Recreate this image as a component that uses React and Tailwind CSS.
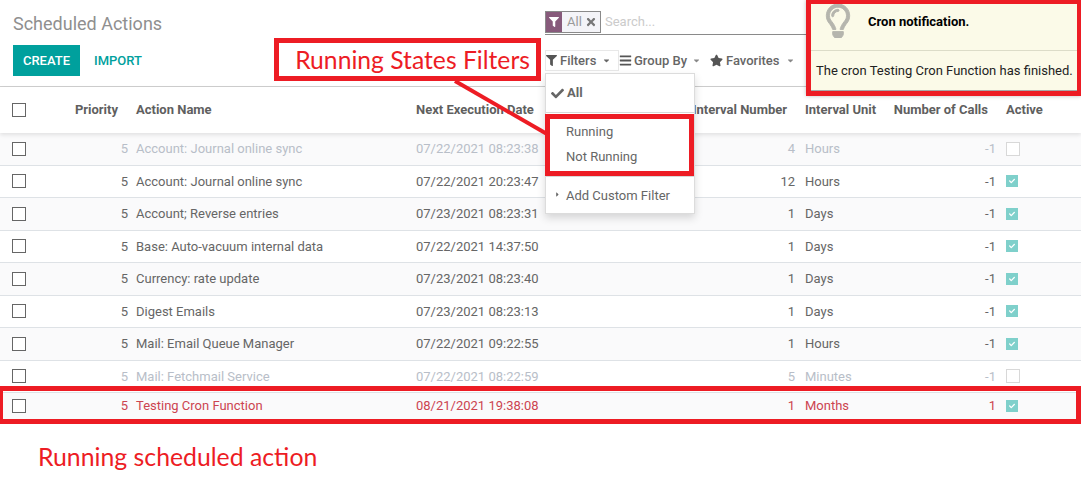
import React from 'react';
import { FaFilter, FaTimes, FaBars, FaStar, FaCheck, FaCaretDown, FaCaretRight, FaRegLightbulb } from 'react-icons/fa';

const rows = [
    { name: 'Account: Journal online sync', date: '07/22/2021 08:23:38', num: 4, unit: 'Hours', calls: -1, active: false, tint: true },
    { name: 'Account: Journal online sync', date: '07/22/2021 20:23:47', num: 12, unit: 'Hours', calls: -1, active: true },
    { name: 'Account; Reverse entries', date: '07/23/2021 08:23:31', num: 1, unit: 'Days', calls: -1, active: true, tint: true },
    { name: 'Base: Auto-vacuum internal data', date: '07/22/2021 14:37:50', num: 1, unit: 'Days', calls: -1, active: true },
    { name: 'Currency: rate update', date: '07/23/2021 08:23:40', num: 1, unit: 'Days', calls: -1, active: true, tint: true },
    { name: 'Digest Emails', date: '07/23/2021 08:23:13', num: 1, unit: 'Days', calls: -1, active: true },
    { name: 'Mail: Email Queue Manager', date: '07/22/2021 09:22:55', num: 1, unit: 'Hours', calls: -1, active: true, tint: true },
    { name: 'Mail: Fetchmail Service', date: '07/22/2021 08:22:59', num: 5, unit: 'Minutes', calls: -1, active: false },
];

const gridCols = 'grid grid-cols-[68px_60px_280px_274px_113px_98px_103px_85px] items-center';

const Checkbox = () => <span className="block w-[14px] h-[14px] ml-3 border border-[#666] bg-white"></span>;

const ActiveBox = ({ active }) => active ? (
    <span className="flex items-center justify-center w-[12px] h-[12px] ml-[10px] bg-[#7fd0cb]">
        <FaCheck size={6} className="text-white" />
    </span>
) : (
    <span className="block w-[14px] h-[14px] ml-[10px] border border-[#d8d8d8] bg-white"></span>
);

const Row = ({ row, color, height = 'h-[32.5px]' }) => (
    <div className={`${gridCols} ${height} border-b border-[#dee2e6] ${row.tint ? 'bg-[#fafafb]' : 'bg-white'} ${color}`}>
        <Checkbox />
        <div className="text-right">5</div>
        <div className="pl-2">{row.name}</div>
        <div className="pl-2">{row.date}</div>
        <div className="text-right">{row.num}</div>
        <div className="pl-[10px]">{row.unit}</div>
        <div className="text-right">{row.calls}</div>
        <ActiveBox active={row.active} />
    </div>
);

const App = () => {
    return (
        <div className="relative w-[1081px] h-[484px] overflow-hidden bg-white text-[13px] font-['Roboto',sans-serif] text-[#666]">
            {/* Control panel */}
            <div className="flex h-[87px] border-b border-[#cfcfcf]">
                <div className="w-[545px] pl-[13px]">
                    <h1 className="pt-[13px] h-[45px] text-[18px] leading-[22px] text-[#8f8f8f]">Scheduled Actions</h1>
                    <div className="flex items-center">
                        <button className="w-[67px] h-[31px] bg-[#00a09d] text-white text-[13px] font-medium">CREATE</button>
                        <button className="ml-[14px] text-[13px] font-medium text-[#00a09d]">IMPORT</button>
                    </div>
                </div>
                <div className="flex-1">
                    <div className="flex items-start w-[261px] h-[24px] mt-[11px] border-b border-[#8a8a8a]">
                        <div className="flex items-center w-[56px] h-[22px] border border-[#8a8a8a] bg-[#f4f4f8]">
                            <span className="flex items-center justify-center w-[16px] h-full bg-[#875a7b]">
                                <FaFilter size={10} className="text-white" />
                            </span>
                            <span className="pl-[5px] text-[#9a9a9a]">All</span>
                            <FaTimes size={12} className="ml-[3px] text-[#777]" />
                        </div>
                        <span className="ml-[4px] leading-[21px] text-[#cbcbcb]">Search...</span>
                    </div>
                    <div className="flex items-center mt-[15px] h-[21px]">
                        <div className="flex items-center h-[21px] w-[74px] border border-[#e8e8e8] font-medium">
                            <FaFilter size={11} className="text-[#555]" />
                            <span className="ml-[3px]">Filters</span>
                            <FaCaretDown size={9} className="ml-[6px]" />
                        </div>
                        <div className="flex items-center font-medium">
                            <FaBars size={13} className="text-[#555]" />
                            <span className="ml-[2px]">Group By</span>
                            <FaCaretDown size={9} className="ml-[5px] text-[#888]" />
                        </div>
                        <div className="flex items-center ml-[9px] font-medium">
                            <FaStar size={13} className="text-[#555]" />
                            <span className="ml-[3px]">Favorites</span>
                            <FaCaretDown size={9} className="ml-[6px] text-[#888]" />
                        </div>
                    </div>
                </div>
            </div>

            {/* List */}
            <div className={`${gridCols} h-[46px] font-bold text-[#5f5f5f] shadow-[0_2px_4px_rgba(0,0,0,0.1)] relative`}>
                <Checkbox />
                <div className="text-right pr-[10px]">Priority</div>
                <div className="pl-2">Action Name</div>
                <div className="pl-2">Next Execution Date</div>
                <div className="text-right pr-2">Interval Number</div>
                <div className="pl-[10px]">Interval Unit</div>
                <div className="text-right pr-2">Number of Calls</div>
                <div className="pl-[10px]">Active</div>
            </div>
            {rows.map((row, i) => (
                <Row key={i} row={row} color={row.active ? 'text-[#666]' : 'text-[#b8bec8]'} />
            ))}
            <Row row={{ name: 'Testing Cron Function', date: '08/21/2021 19:38:08', num: 1, unit: 'Months', calls: 1, active: true, tint: true }} color="text-[#cc4450]" height="h-[27px] pb-[1px]" />

            <p className="ml-[38px] mt-[21px] text-[24.8px] leading-[32px] font-['Lato',sans-serif] text-[#ed1c24]">Running scheduled action</p>

            {/* Filters dropdown */}
            <div className="absolute left-[545px] top-[73px] w-[150px] h-[141px] bg-white border border-[#dcdcdc] shadow-[0_4px_8px_rgba(0,0,0,0.15)]">
                <div className="flex items-center h-[39px] pl-[5px] font-bold text-[#666] border-b border-[#d8d8d8]">
                    <FaCheck size={13} className="text-[#666]" />
                    <span className="ml-[3px]">All</span>
                </div>
                <div className="pl-[20px] pt-[6px] h-[64px] border-b border-[#d8d8d8]">
                    <div className="h-[25px] leading-[25px]">Running</div>
                    <div className="h-[25px] leading-[25px]">Not Running</div>
                </div>
                <div className="relative pl-[20px] pt-[9px] leading-[20px]">
                    <FaCaretRight size={7} className="absolute left-[8px] top-[14px]" />
                    Add Custom Filter
                </div>
            </div>

            {/* Notification */}
            <div className="absolute left-[806px] top-0 w-[275px] h-[96px] bg-[#fbfae8] border-solid border-t-[4px] border-l-[5px] border-b-[5px] border-r-[4px] border-[#ed1c24] shadow-[0_0_4px_rgba(0,0,0,0.25)]">
                <div className="flex h-[47px] border-b border-[#dcdcc8]">
                    <FaRegLightbulb size={34} stroke="currentColor" strokeWidth={14} className="ml-[10px] text-[#b5b5ad]" />
                    <span className="ml-[13px] mt-[10px] font-bold text-[13px] leading-[16px] text-black">Cron notification.</span>
                </div>
                <p className="pl-[5px] pt-[12px] text-[#222] leading-[16px]">The cron Testing Cron Function has finished.</p>
                <div className="absolute left-0 right-0 bottom-0 h-px bg-[#a8a8a8]"></div>
            </div>

            {/* Annotations */}
            <svg className="absolute left-0 top-0 pointer-events-none" width="1081" height="484">
                <line x1="455" y1="81" x2="547" y2="134" stroke="#ed1c24" strokeWidth="4" />
            </svg>
            <div className="absolute left-[274px] top-[38px] w-[267px] h-[43px] flex items-center justify-end pr-[6px] bg-white border-[5px] border-[#ed1c24] font-['Lato',sans-serif] text-[24.7px] text-[#ed1c24]">Running States Filters</div>
            <div className="absolute left-[545px] top-[114px] w-[149px] h-[62px] border-[5px] border-[#ed1c24]"></div>
            <div className="absolute left-[-2px] top-[386px] w-[1083px] h-[38px] border-[5px] border-[#ed1c24]"></div>
        </div>
    );
};

export default App;
